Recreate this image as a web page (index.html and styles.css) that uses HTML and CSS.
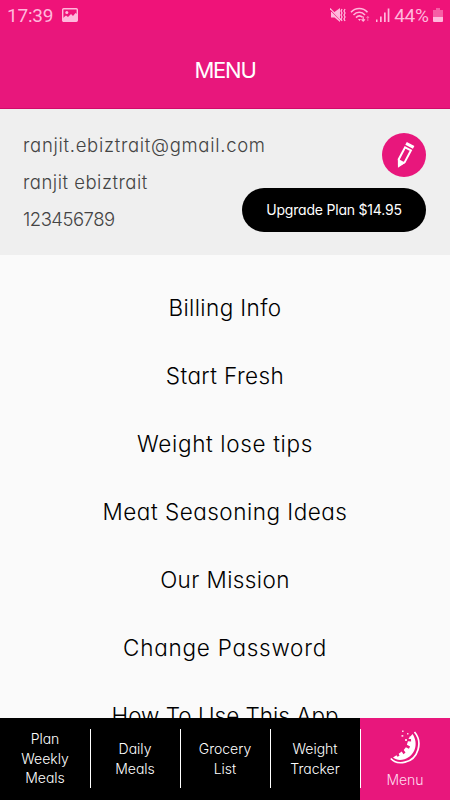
FILE: index.html
```html
<!DOCTYPE html>
<html lang="en">
<head>
    <meta charset="UTF-8">
    <meta name="viewport" content="width=device-width, initial-scale=1.0">
    <title>Menu</title>
    <link rel="stylesheet" href="styles.css">
</head>
<body>
    <!-- Header -->
    <header class="header">
        <div class="status-bar">
            <span class="time">17:39</span>
            <svg class="picture-icon" width="16" height="14" viewBox="0 0 16 14">
                <rect x="0.7" y="0.7" width="14.6" height="12.6" rx="1" fill="none" stroke="currentColor" stroke-width="1.4"/>
                <circle cx="4.8" cy="4.6" r="1.5" fill="currentColor"/>
                <path d="M1 10l3-2.5 2 1.5 3-3 2 2 2.5-3L15 6v7H1z" fill="currentColor"/>
            </svg>
            <div class="status-right">
                <svg width="16" height="16" viewBox="0 0 16 16">
                    <path d="M1 5h3.500L10 1v14l-5.500-4.500H1z" fill="currentColor"/>
                    <path d="M0 2.500l11 11" stroke="#ef1379" stroke-width="1.200"/>
                    <path d="M0 1.500l11 11.500" stroke="currentColor" stroke-width="1.200"/>
                    <path d="M12 2l-1 2 1 2-1 2 1 2-1 2 1 2M15 2l-1 2 1 2-1 2 1 2-1 2 1 2" fill="none" stroke="currentColor" stroke-width="1.300"/>
                </svg>
                <svg width="20" height="16" viewBox="0 0 20 16">
                    <g fill="none" stroke="currentColor" stroke-width="1.600">
                        <path d="M1 5.300c4.500-5 12-5 16.500 0M3.500 8c3.300-3.600 8.200-3.600 11.500 0M6 10.600c2-2 4.600-2 6.500-.4"/>
                        <path d="M13.200 9.500v4.500M11.500 12.300l1.700 1.900 1.700-1.900" stroke-width="1.200"/>
                        <path d="M17.800 14V9.500M16.500 11l1.300-1.500 1.300 1.500" stroke-width="1" opacity=".55"/>
                    </g>
                    <path d="M8 12h3l-1.500 2z" fill="currentColor"/>
                </svg>
                <svg width="15" height="16" viewBox="0 0 15 16">
                    <path d="M1 12.500h1.500V15H1zM5 9.500h1.700V15H5zM9 5.500h1.700V15H9zM12.700 1.500h1.700V15h-1.700z" fill="currentColor"/>
                </svg>
                <span class="battery-level">44%</span>
                <svg width="10" height="16" viewBox="0 0 10 16">
                    <path d="M3 1h4v2h3v7H0V3h3z" fill="currentColor" opacity=".45"/>
                    <path d="M0 10h10v4a1 1 0 0 1-1 1H1a1 1 0 0 1-1-1z" fill="currentColor"/>
                </svg>
            </div>
        </div>
        <h1 class="title">MENU</h1>
    </header>

    <!-- Profile -->
    <section class="profile">
        <div class="details">
            <p class="email">ranjit.ebiztrait@gmail.com</p>
            <p class="name">ranjit ebiztrait</p>
            <p class="phone">123456789</p>
        </div>
        <div class="actions">
            <button class="edit-button" aria-label="Edit profile">
                <svg width="44" height="44" viewBox="0 0 44 44">
                    <g transform="translate(22.500 22.500) rotate(28)">
                        <path d="M-3.300-7.500h6.600V6L0 10.500-3.300 6z" fill="none" stroke="#fff" stroke-width="2"/>
                        <path d="M-4.300 6h8.600L0 14z" fill="#fff"/>
                        <path d="M-4.300-13h8.600v3.200h-8.600z" fill="#fff"/>
                    </g>
                </svg>
            </button>
            <button class="upgrade-button">Upgrade Plan $14.95</button>
        </div>
    </section>

    <!-- Menu list -->
    <main class="menu-list">
        <a class="menu-item billing">Billing Info</a>
        <a class="menu-item fresh">Start Fresh</a>
        <a class="menu-item tips">Weight lose tips</a>
        <a class="menu-item seasoning">Meat Seasoning Ideas</a>
        <a class="menu-item mission">Our Mission</a>
        <a class="menu-item password">Change Password</a>
        <a class="menu-item how-to">How To Use This App</a>
    </main>

    <!-- Bottom tabs -->
    <nav class="tabs">
        <a class="tab"><span>Plan<br>Weekly<br>Meals</span></a>
        <a class="tab"><span>Daily<br>Meals</span></a>
        <a class="tab"><span>Grocery<br>List</span></a>
        <a class="tab"><span>Weight<br>Tracker</span></a>
        <a class="tab active">
            <svg width="32" height="36" viewBox="0 0 32 36">
                <path d="M25.500 3C34 13 29.500 30 16 33.200 10.500 34.500 5 33 1.800 29.500" fill="none" stroke="#fff" stroke-width="1.700"/>
                <path d="M23.500 5c6.500 9.500 2.500 22-8 25.200-4.500 1.300-8.500.8-11.500-1.700l3.500-2.300 1 1.500 2-1-.8-2 3-2.300 1.800 2.800 2-1.600-1.800-2.700 2.200-2.700 3 1.600 1.200-2.300-3.200-1.700 1-3.500 3.200.3-.1-2.500-2.700-.2z" fill="#fff"/>
                <path d="M13 1.500h1.600v1.600H13zM18 4h1.500v1.500H18zM12.500 6h1.800v1.800h-1.800zM20.500 7.500H22V9h-1.500zM16 10h2v2h-2z" fill="#fff" opacity=".8"/>
            </svg>
            <span>Menu</span>
        </a>
    </nav>
</body>
</html>
```
FILE: styles.css
```css
* {
    box-sizing: border-box;
}
body {
    font-family: Inter, "Open Sans", sans-serif;
    font-weight: 300;
    font-feature-settings: "cv11";
    background-color: #fafafa;
    color: #000;
    margin: 0;
    height: 100vh;
    display: flex;
    flex-direction: column;
    overflow: hidden;
}
button {
    font: inherit;
    border: none;
    padding: 0;
    color: white;
    cursor: pointer;
}
svg {
    display: block;
}

/* Header */
.header {
    flex: none;
    height: 109px;
    background-color: #e8177c;
    border-bottom: 1px solid #d00b6a;
    color: white;
}
.status-bar {
    display: flex;
    align-items: center;
    height: 30px;
    padding: 0 7px;
    background-color: #ef1379;
    color: #ffb8dc;
    font-family: Roboto, sans-serif;
    font-size: 19px;
    font-weight: 400;
}
.time {
    letter-spacing: -0.2px;
}
.picture-icon {
    margin-left: 9px;
}
.status-right {
    display: flex;
    align-items: center;
    margin-left: auto;
    gap: 4.5px;
}
.battery-level {
    letter-spacing: -0.3px;
}
.title {
    margin: 24px 0 0;
    font-size: 22px;
    line-height: 32px;
    font-weight: 400;
    letter-spacing: -1.2px;
    text-align: center;
}

/* Profile */
.profile {
    flex: none;
    display: flex;
    justify-content: space-between;
    height: 146px;
    padding: 18px 24px 0 23px;
    background-color: #efefef;
}
.details p {
    margin: 0;
    font-size: 18.5px;
    line-height: 37px;
    color: #444;
    white-space: nowrap;
}
.details .email {
    letter-spacing: 0.7px;
}
.details .name {
    letter-spacing: 0.5px;
}
.details .phone {
    letter-spacing: -0.5px;
}
.actions {
    width: 184px;
    margin-left: -60px;
    padding-top: 6px;
    display: flex;
    flex-direction: column;
    align-items: flex-end;
    gap: 11px;
}
.edit-button {
    width: 44px;
    height: 44px;
    border-radius: 50%;
    background-color: #e8177c;
}
.upgrade-button {
    width: 184px;
    height: 44px;
    padding-bottom: 2px;
    border-radius: 22px;
    background-color: #000;
    font-size: 14px;
    font-weight: 400;
    letter-spacing: -0.2px;
}

/* Menu list */
.menu-list {
    flex: 1;
    min-height: 0;
    padding-top: 19px;
    overflow: hidden;
}
.menu-item {
    display: block;
    height: 68px;
    line-height: 68px;
    font-size: 22.5px;
    letter-spacing: 0.4px;
    text-align: center;
}
.menu-item.tips {
    letter-spacing: 0.65px;
}
.menu-item.seasoning {
    letter-spacing: 0.5px;
}
.menu-item.password {
    letter-spacing: 0.75px;
}
.menu-item.how-to {
    letter-spacing: 0;
}

/* Bottom tabs */
.tabs {
    flex: none;
    display: flex;
    height: 82px;
    background-color: #000;
}
.tab {
    position: relative;
    flex: 1;
    display: flex;
    flex-direction: column;
    align-items: center;
    justify-content: center;
    padding-bottom: 1px;
    color: white;
    font-size: 14px;
    line-height: 19.5px;
    text-align: center;
}
.tab::after {
    content: "";
    position: absolute;
    top: 11px;
    right: -1px;
    width: 1px;
    height: 59px;
    background-color: white;
    z-index: 1;
}
.tab.active {
    background-color: #e8177c;
    color: #ffd9ec;
    justify-content: flex-start;
    padding-top: 11px;
    gap: 5px;
}
.tab.active::after {
    display: none;
}
```
